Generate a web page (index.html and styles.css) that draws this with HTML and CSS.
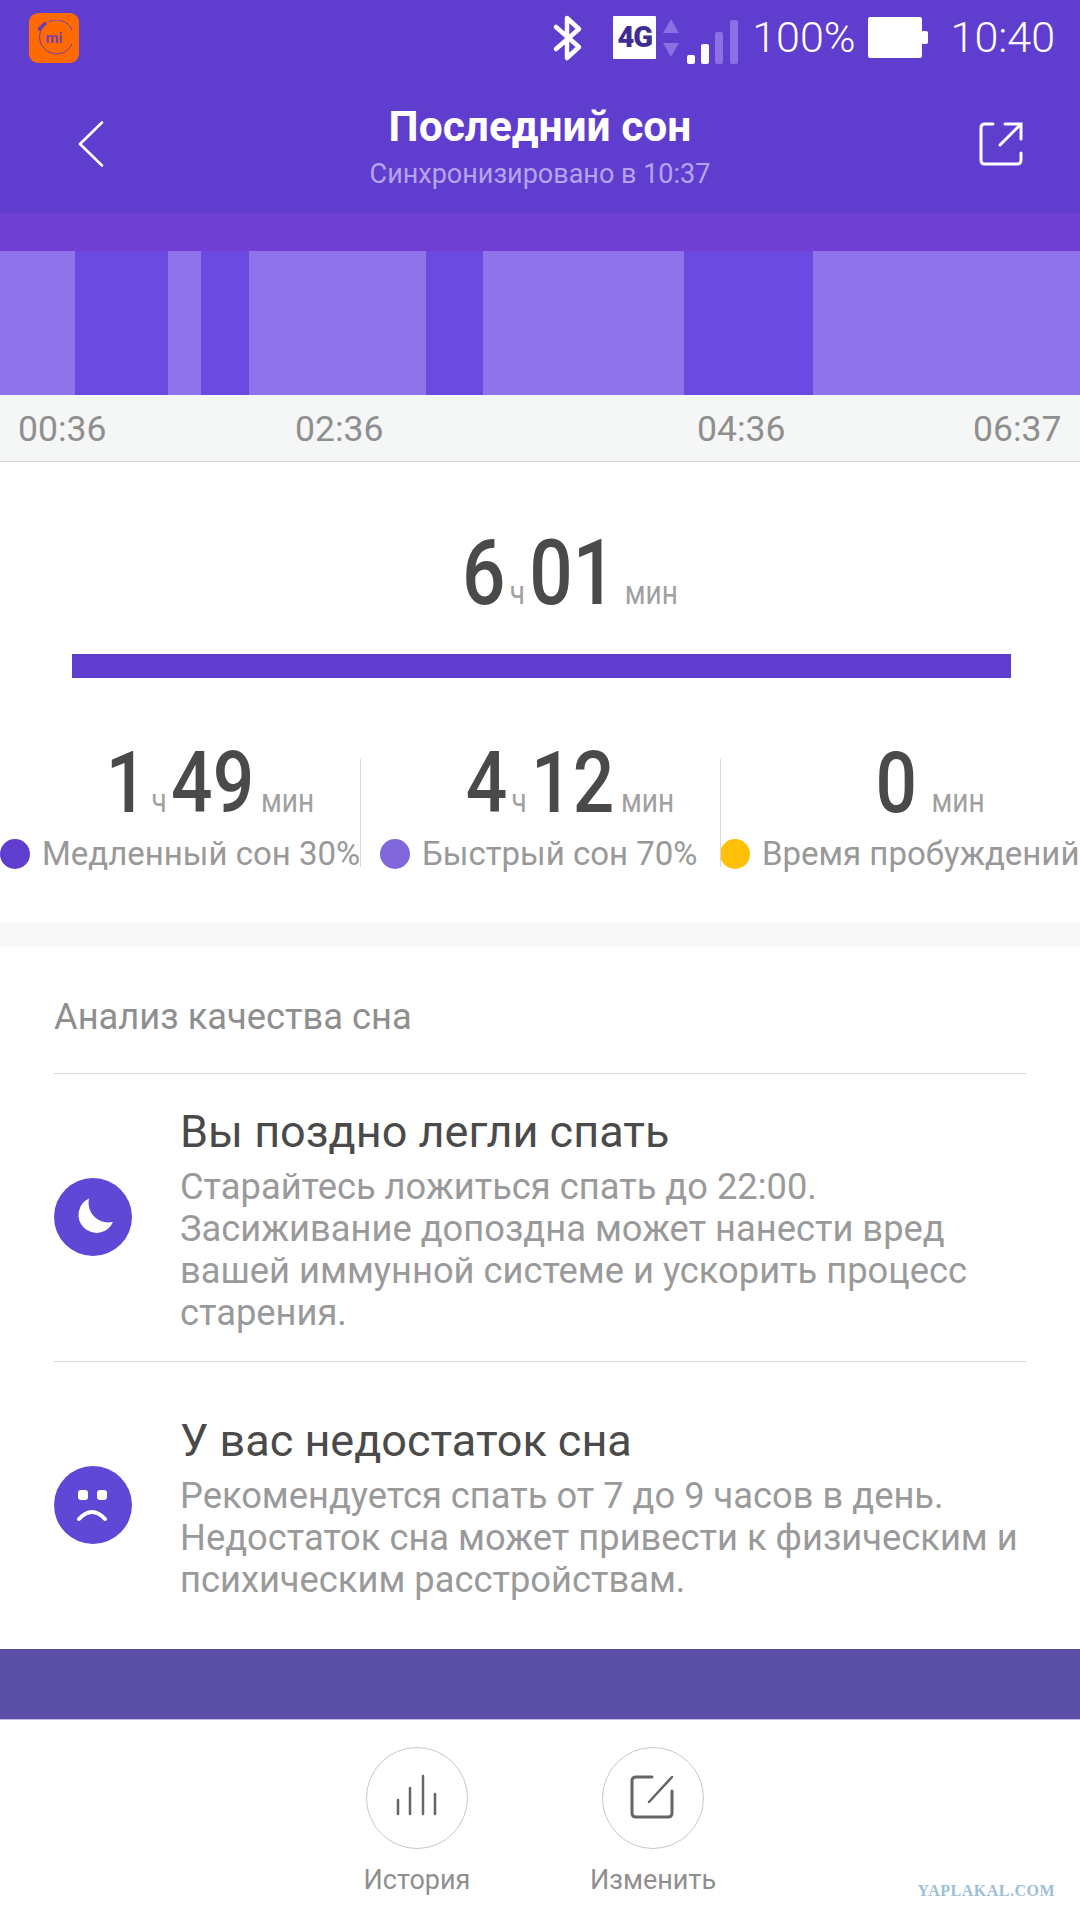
FILE: index.html
```html
<!DOCTYPE html>
<html lang="ru">
<head>
    <meta charset="UTF-8">
    <meta name="viewport" content="width=device-width, initial-scale=1.0">
    <title>Последний сон</title>
    <link rel="stylesheet" href="styles.css">
</head>
<body>
    <div class="page">
        <!-- Header -->
        <div class="header">
            <div class="status-bar">
                <div class="app-logo">
                    <svg class="app-ring" width="36" height="36" viewBox="0 0 36 36"><path d="M8 5.5A17 17 0 1 0 13 1.7" fill="none" stroke="#6b3db0" stroke-width="1"/><path d="M3.5 9L9 3.5" fill="none" stroke="#6b3db0" stroke-width="3.5" stroke-linecap="round"/></svg>
                    <span class="app-mi">mi</span>
                </div>
                <div class="status-right">
                    <svg class="bluetooth" width="32" height="48" viewBox="0 0 32 48"><path d="M4 13L27 33L15 44V4L27 15L4 35" fill="none" stroke="#fff" stroke-width="4.5" stroke-linejoin="round" stroke-linecap="round"/></svg>
                    <div class="net-badge">4G</div>
                    <svg class="net-arrows" width="16" height="40" viewBox="0 0 16 40"><path d="M8 1L16 15H0Z" fill="#8a70e2"/><path d="M0 25H16L8 39Z" fill="#8a70e2"/></svg>
                    <svg class="signal" width="52" height="44" viewBox="0 0 52 44">
                        <rect x="0" y="35" width="8" height="9" rx="2" fill="#fff"/>
                        <rect x="14" y="24" width="8" height="20" rx="2" fill="#fff"/>
                        <rect x="28" y="12" width="8" height="32" rx="2" fill="#8a70e2"/>
                        <rect x="43" y="0" width="8" height="44" rx="2" fill="#8a70e2"/>
                    </svg>
                    <span class="status-text battery-text">100%</span>
                    <svg class="battery" width="60" height="41" viewBox="0 0 60 41"><rect x="0" y="0" width="54" height="41" rx="2" fill="#fff"/><rect x="53" y="14" width="7" height="13" rx="2" fill="#fff"/></svg>
                    <span class="status-text clock">10:40</span>
                </div>
            </div>
            <div class="nav">
                <svg class="nav-back" width="26" height="46" viewBox="0 0 26 46"><path d="M24 1.5L2 23L24 44.500" fill="none" stroke="#fff" stroke-width="2.600" stroke-linecap="round" stroke-linejoin="round"/></svg>
                <div class="nav-title">
                    <h1>Последний сон</h1>
                    <p>Синхронизировано в 10:37</p>
                </div>
                <svg class="nav-share" width="44" height="44" viewBox="0 0 44 44"><path d="M14 2H6Q2 2 2 6V38Q2 42 6 42H38Q42 42 42 38V31M22 2" fill="none" stroke="#fff" stroke-width="3" stroke-linecap="round"/><path d="M21 23L42 2M26 2H42V17" fill="none" stroke="#fff" stroke-width="3" stroke-linecap="round"/></svg>
            </div>
        </div>

        <!-- Sleep chart -->
        <div class="chart-top"></div>
        <div class="chart">
            <div class="seg light" style="width:75px"></div>
            <div class="seg deep" style="width:93px"></div>
            <div class="seg light" style="width:33px"></div>
            <div class="seg deep" style="width:48px"></div>
            <div class="seg light" style="width:177px"></div>
            <div class="seg deep" style="width:57px"></div>
            <div class="seg light" style="width:201px"></div>
            <div class="seg deep" style="width:129px"></div>
            <div class="seg light" style="width:267px"></div>
        </div>
        <div class="axis">
            <span>00:36</span>
            <span>02:36</span>
            <span>04:36</span>
            <span>06:37</span>
        </div>

        <!-- Totals -->
        <div class="summary">
            <div class="time time-big">
                <span class="num">6</span><span class="unit unit-h">ч</span><span class="num">01</span><span class="unit unit-m">мин</span>
            </div>
            <div class="total-bar"></div>
            <div class="stats">
                <div class="stat">
                    <div class="time">
                        <span class="num">1</span><span class="unit unit-h">ч</span><span class="num">49</span><span class="unit unit-m">мин</span>
                    </div>
                    <div class="legend"><span class="dot dot-deep"></span>Медленный сон 30%</div>
                </div>
                <div class="stat">
                    <div class="time">
                        <span class="num">4</span><span class="unit unit-h">ч</span><span class="num">12</span><span class="unit unit-m">мин</span>
                    </div>
                    <div class="legend"><span class="dot dot-light"></span>Быстрый сон 70%</div>
                </div>
                <div class="stat">
                    <div class="time">
                        <span class="num">0</span><span class="unit unit-gap">мин</span>
                    </div>
                    <div class="legend"><span class="dot dot-awake"></span>Время пробуждений</div>
                </div>
            </div>
        </div>
        <div class="band"></div>

        <!-- Analysis -->
        <div class="analysis">
            <div class="analysis-title">Анализ качества сна</div>
            <div class="advice advice-first">
                <div class="advice-icon">
                    <svg width="78" height="78" viewBox="0 0 78 78"><path d="M35 20.500A18 18 0 1 0 59 44C46 47 32 36 35 20.500Z" fill="#fff"/></svg>
                </div>
                <div class="advice-text">
                    <h2>Вы поздно легли спать</h2>
                    <p>Старайтесь ложиться спать до 22:00.<br>Засиживание допоздна может нанести вред<br>вашей иммунной системе и ускорить процесс<br>старения.</p>
                </div>
            </div>
            <div class="advice advice-last">
                <div class="advice-icon">
                    <svg width="78" height="78" viewBox="0 0 78 78"><rect x="24" y="24" width="10" height="10" rx="3" fill="#fff"/><rect x="43" y="24" width="10" height="10" rx="3" fill="#fff"/><path d="M25 53Q38 39 51 53" fill="none" stroke="#fff" stroke-width="4" stroke-linecap="round"/></svg>
                </div>
                <div class="advice-text">
                    <h2>У вас недостаток сна</h2>
                    <p>Рекомендуется спать от 7 до 9 часов в день.<br>Недостаток сна может привести к физическим и<br>психическим расстройствам.</p>
                </div>
            </div>
        </div>

        <div class="promo"></div>

        <!-- Bottom actions -->
        <div class="actions">
            <div class="action">
                <div class="action-circle">
                    <svg width="102" height="102" viewBox="0 0 102 102"><path d="M32 53V67M44 41V67M57 29V67M69 47V67" fill="none" stroke="#666" stroke-width="2.500" stroke-linecap="round"/></svg>
                </div>
                <span>История</span>
            </div>
            <div class="action">
                <div class="action-circle">
                    <svg width="102" height="102" viewBox="0 0 102 102"><path d="M50 30H34Q30 30 30 34V66Q30 70 34 70H66Q70 70 70 66V44" fill="none" stroke="#666" stroke-width="3" stroke-linecap="round"/><path d="M70 30L47 55" fill="none" stroke="#666" stroke-width="2.500" stroke-linecap="round"/></svg>
                </div>
                <span>Изменить</span>
            </div>
        </div>
        <div class="watermark">YAPLAKAL.COM</div>
    </div>
</body>
</html>
```

FILE: styles.css
```css
* {
    box-sizing: border-box;
}
body {
    margin: 0;
    font-family: Roboto, "Noto Sans", sans-serif;
    background-color: #fff;
}
h1, h2, p {
    margin: 0;
}
.page {
    position: relative;
    width: 1080px;
    height: 1920px;
    overflow: hidden;
}

/* header */
.header {
    height: 213px;
    background-color: #5f3dce;
    color: #fff;
}
.status-bar {
    height: 75px;
    display: flex;
    align-items: center;
    justify-content: space-between;
    padding: 0 25px 0 29px;
}
.app-logo {
    position: relative;
    width: 50px;
    height: 50px;
    margin-top: 1px;
    border-radius: 9px;
    background-color: #ff6a00;
    display: flex;
    align-items: center;
    justify-content: center;
}
.app-ring {
    position: absolute;
    left: 7px;
    top: 7px;
}
.app-mi {
    color: #7b3fa8;
    font-size: 15px;
    font-weight: 700;
    line-height: 1;
}
.status-right {
    display: flex;
    align-items: center;
}
.net-badge {
    width: 43px;
    height: 43px;
    margin-left: 29px;
    background-color: #fff;
    border-radius: 1px;
    color: #3f2c92;
    font-size: 29px;
    font-weight: 900;
    line-height: 43px;
    text-align: center;
    letter-spacing: -1px;
}
.net-arrows {
    margin-left: 7px;
}
.signal {
    margin-left: 8px;
    margin-top: 8px;
}
.status-text {
    font-size: 43px;
    font-weight: 300;
    line-height: 1;
}
.battery-text {
    margin-left: 13px;
}
.battery {
    margin-left: 12px;
    margin-top: -1px;
}
.clock {
    margin-left: 23px;
}
.nav {
    height: 138px;
    display: flex;
    align-items: center;
    justify-content: space-between;
    padding: 0 57px 0 78px;
}
.nav-title {
    text-align: center;
    align-self: flex-start;
    margin-right: 3px;
    padding-top: 29px;
}
.nav-title h1 {
    font-size: 42.500px;
    font-weight: 700;
    line-height: 46px;
}
.nav-title p {
    margin-top: 4px;
    color: #b5a3ee;
    font-size: 27px;
    line-height: 40px;
}

/* chart */
.chart-top {
    height: 38px;
    background-color: #7040d4;
}
.chart {
    height: 144px;
    display: flex;
}
.seg.light {
    background-color: #8f73ea;
}
.seg.deep {
    background-color: #6a4ae0;
}
.axis {
    height: 67px;
    display: grid;
    grid-template-columns: 277px 402px 276px auto;
    align-items: center;
    padding: 2px 0 0 18px;
    background-color: #f5f6f6;
    border-bottom: 1px solid #d6d6d6;
    color: #8f8f8f;
    font-size: 35.5px;
}

/* totals */
.summary {
    height: 461px;
    padding-top: 67px;
}
.time {
    display: flex;
    align-items: baseline;
    justify-content: center;
    margin-left: 60px;
    color: #4a4a4a;
    line-height: 1;
    transform: scaleX(0.85);
}
.num {
    font-size: 86px;
    font-weight: 500;
}
.time-big .num {
    font-size: 90px;
}
.unit {
    color: #a0a0a0;
    font-size: 33px;
}
.unit-h {
    margin: 0 5px;
}
.unit-m {
    margin-left: 8px;
}
.time-big .unit-m {
    margin-left: 10px;
}
.unit-gap {
    margin-left: 17px;
}
.total-bar {
    height: 24px;
    margin: 35px 69px 0 72px;
    background-color: #5f3dce;
}
.stats {
    display: grid;
    grid-template-columns: 360px 360px 360px;
    margin-top: 62px;
}
.stat {
    position: relative;
}
.stat + .stat::before {
    content: '';
    position: absolute;
    left: 0;
    top: 19px;
    bottom: 6px;
    width: 1px;
    background-color: #d8d8d8;
}
.legend {
    display: flex;
    align-items: center;
    gap: 12px;
    margin-top: 9px;
    color: #999;
    font-size: 33px;
    line-height: 38px;
    white-space: nowrap;
}
.stat:nth-child(2) .legend {
    padding-left: 20px;
}
.dot {
    width: 30px;
    height: 30px;
    border-radius: 50%;
    flex-shrink: 0;
}
.dot-deep {
    background-color: #5f3dce;
}
.dot-light {
    background-color: #8068dc;
}
.dot-awake {
    background-color: #ffc107;
}
.band {
    height: 24px;
    background-color: #f8f8f8;
}

/* analysis */
.analysis {
    height: 702px;
    padding: 0 54px;
}
.analysis-title {
    height: 127px;
    padding-top: 50px;
    border-bottom: 1px solid #d8d8d8;
    color: #8f8f8f;
    font-size: 36.300px;
    line-height: 40px;
}
.advice {
    display: flex;
    align-items: center;
    height: 287px;
    border-bottom: 1px solid #d8d8d8;
}
.advice-first {
    height: 288px;
}
.advice-last {
    border-bottom: none;
}
.advice-icon {
    width: 78px;
    height: 78px;
    margin-top: -2px;
    border-radius: 50%;
    background-color: #6048d6;
    flex-shrink: 0;
}
.advice-icon svg {
    display: block;
}
.advice-text {
    margin-left: 48px;
    margin-top: 4px;
    white-space: nowrap;
}
.advice-text h2 {
    color: #4a4a4a;
    font-size: 45px;
    font-weight: 400;
    line-height: 52px;
}
.advice-text p {
    margin-top: 8px;
    color: #9a9a9a;
    font-size: 36.300px;
    line-height: 42px;
}

/* bottom */
.promo {
    height: 71px;
    background-color: #5c4fa8;
    border-top: 1px solid #574b94;
    border-bottom: 1px solid #c5bfe8;
}
.actions {
    display: flex;
    justify-content: center;
    padding: 27px 10px 0 0;
}
.action {
    width: 236px;
    display: flex;
    flex-direction: column;
    align-items: center;
    color: #8f8f8f;
    font-size: 27px;
}
.action-circle {
    width: 102px;
    height: 102px;
    border-radius: 50%;
    border: 1px solid #c8c8c8;
}
.action-circle svg {
    display: block;
    margin: -1px;
}
.action span {
    margin-top: 14px;
    line-height: 34px;
}
.watermark {
    position: absolute;
    right: 25px;
    top: 1882px;
    color: #9cc0d8;
    font-family: "Liberation Serif", serif;
    font-size: 16px;
    font-weight: 700;
    letter-spacing: 0.5px;
}
```
